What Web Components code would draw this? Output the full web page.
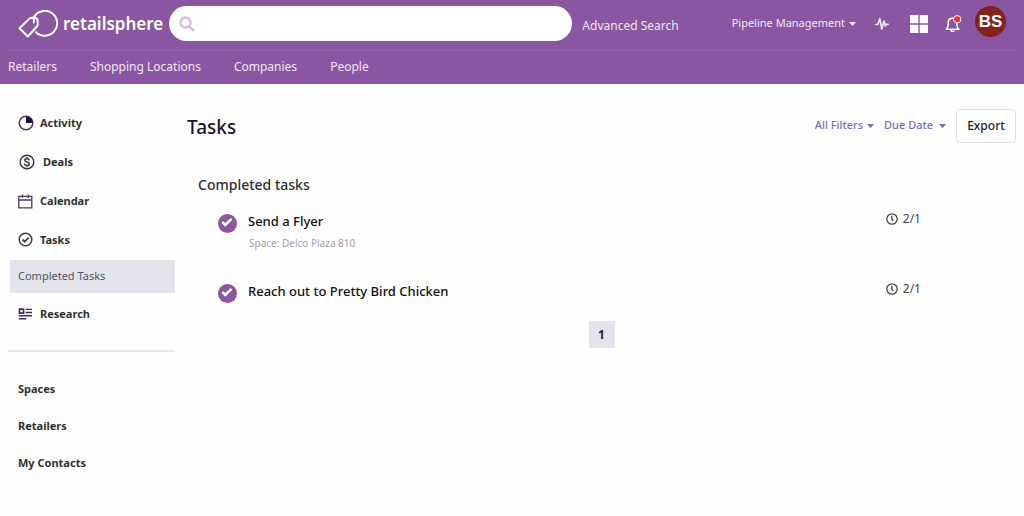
<!DOCTYPE html>
<html lang="en">
<head>
<meta charset="utf-8">
<meta name="viewport" content="width=device-width, initial-scale=1">
<title>Tasks - retailsphere</title>
<style>
  body { margin: 0; background: #fefefe; color: #303030; font: 12px/16px "Noto Sans", "Open Sans", sans-serif; }
</style>
</head>
<body>
<app-shell>
  <app-header slot="header"></app-header>
  <side-nav slot="side"></side-nav>
  <task-page></task-page>
</app-shell>

<script>
const define = (name, html) => {
  const template = document.createElement('template');
  template.innerHTML = html;
  customElements.define(name, class extends HTMLElement {
    constructor() {
      super();
      this.attachShadow({ mode: 'open' }).append(template.content.cloneNode(true));
    }
  });
};

define('app-shell', `
  <style>
    :host { display: block; }
    .body { display: grid; grid-template-columns: 167px minmax(0, 1fr); column-gap: 12px; padding: 0 8px; }
  </style>
  <slot name="header"></slot>
  <div class="body"><slot name="side"></slot><slot></slot></div>
`);

/* Drop-down whose single visible label is followed by a small caret. */
customElements.define('menu-select', class extends HTMLElement {
  connectedCallback() {
    const root = this.attachShadow({ mode: 'open' });
    root.innerHTML = `
      <style>
        :host { display: inline-flex; align-items: center; gap: var(--caret-gap, 4px); }
        select { appearance: none; field-sizing: content; border: 0; margin: 0; padding: 0; background: none; color: inherit; font: inherit; }
        svg { width: 7px; height: 4px; fill: currentColor; pointer-events: none; margin-top: 2px; }
      </style>
      <select><option></option></select>
      <svg viewBox="0 0 7 4" aria-hidden="true"><path d="M0 0h7L3.500 4z"/></svg>`;
    const select = root.querySelector('select');
    select.setAttribute('aria-label', this.getAttribute('label'));
    select.options[0].textContent = this.getAttribute('label');
  }
});

define('brand-logo', `
  <style>
    :host { display: block; }
    a { display: flex; align-items: center; gap: 4px; color: #fff; text-decoration: none; font-weight: 600; font-size: 17px; line-height: 28px; }
    svg { width: 41px; height: 28px; }
  </style>
  <a href="#"><svg viewBox="0 0 41 28" fill="none" stroke="#fff" stroke-width="2" stroke-linejoin="round" stroke-linecap="round" aria-hidden="true">
    <path d="M15.800 7.200A12.500 12.500 0 1 1 18 22.300"/>
    <path d="M15.800 12.500c-.4-2.400.1-4 1.200-5.800"/>
    <path d="M1.500 18.300 11.500 8.600q1-.9 2.400-.9l3.400.2q2 .2 2.200 2.200l.3 4q0 1.400-.9 2.400L9.800 26.500z"/>
  </svg><span>retailsphere</span></a>
`);

define('search-box', `
  <style>
    :host { display: block; }
    label { display: flex; align-items: center; gap: 8px; height: 35px; padding: 0 16px 0 10px; border-radius: 18px; background: #fff; }
    svg { flex: none; width: 16px; height: 16px; }
    input { flex: 1; min-width: 0; border: 0; padding: 0; outline: 0; background: none; font: inherit; color: #303030; }
  </style>
  <label><svg viewBox="0 0 16 16" fill="none" stroke="#d5bfe0" stroke-width="2.400" stroke-linecap="round" aria-hidden="true"><circle cx="6.500" cy="6.500" r="5"/><path d="M10.300 10.300 14.300 14.300"/></svg>
  <input type="search" aria-label="Search"></label>
`);

define('app-header', `
  <style>
    :host { display: block; background: #8b56a1; color: #f0e6f4; padding: 0 8px; }
    .top { display: flex; align-items: center; height: 49px; padding: 0 10px; border-bottom: 2px solid #935fa9; }
    .top > * { flex: none; }
    brand-logo { margin: 0 6px 2px 0; }
    .top search-box { flex: 1 1 0; margin-bottom: 2px; }
    a { color: inherit; text-decoration: none; }
    .advanced { margin: 2px 53px 0 10px; }
    menu-select { font-size: 11px; margin: 0 19px 4px 0; }
    button { display: block; border: 0; padding: 0; background: none; color: #fff; margin-bottom: 2px; }
    button svg { display: block; }
    .avatar { width: 31px; height: 31px; border-radius: 50%; background: #83231f; font: bold 17px/31px "Liberation Sans", Arial, sans-serif; margin-bottom: 6px; }
    .pulse { margin-right: 21px; }
    .grid { margin-right: 17px; }
    .bell { margin-right: 13px; }
    nav { display: flex; gap: 33px; align-items: center; padding-bottom: 2px; height: 31px; }
  </style>
  <div class="top">
    <brand-logo></brand-logo>
    <search-box></search-box>
    <a class="advanced" href="#">Advanced Search</a>
    <menu-select label="Pipeline Management"></menu-select>
    <button class="pulse" aria-label="Activity"><svg width="14" height="14" viewBox="0 0 14 14" fill="none" stroke="#f3eaf7" stroke-width="1.600" stroke-linejoin="round" stroke-linecap="round"><path d="M.8 7.500h2L4.800 1.500l2 10.500L9 4l1.400 5 1-1.800h1.800"/></svg></button>
    <button class="grid" aria-label="Apps"><svg width="18" height="18" viewBox="0 0 18 18" fill="#fff"><path d="M0 0h8.300v8.300H0zM9.700 0H18v8.300H9.700zM0 9.700h8.300V18H0zM9.700 9.700H18V18H9.700z"/></svg></button>
    <button class="bell" aria-label="Notifications"><svg width="17" height="18" viewBox="0 0 17 18" fill="none" stroke="#fff" stroke-width="1.500" stroke-linejoin="round"><path d="M1.200 14.200h12.600c-1.700-1.200-2-2.700-2-6.200 0-3-1.800-4.700-4.300-4.700S3.200 5 3.200 8c0 3.500-.3 5-2 6.200zM5.500 14.500c.3 2.600 3.700 2.600 4 0"/><circle cx="12.200" cy="4.300" r="3.700" fill="#f3302f" stroke="#fff" stroke-width="1"/></svg></button>
    <button class="avatar">BS</button>
  </div>
  <nav aria-label="Primary"><a href="#">Retailers</a><a href="#">Shopping Locations</a><a href="#">Companies</a><a href="#">People</a></nav>
`);

define('nav-item', `
  <style>
    :host { display: block; font-size: 11px; font-weight: 700; }
    a { display: flex; align-items: center; gap: var(--icon-gap, 6px); height: 37px; padding-left: 10px; color: inherit; text-decoration: none; }
    :host([current]) { font-weight: 400; color: #555560; margin-left: 2px; background: #e3e3ec; }
    :host([current]) a { height: 33px; padding: 0 8px 2px; box-sizing: border-box; }
    ::slotted(svg) { width: 16px; height: 16px; flex: none; }
  </style>
  <a href="#"><slot name="icon"></slot><slot></slot></a>
`);

define('side-nav', `
  <style>
    :host { display: block; padding-top: 20px; }
    nav { display: grid; }
    .primary { gap: 2px; }
    .deals { --icon-gap: 8px; padding-left: 1px; }
    hr { border: 0; border-top: 2px solid #eaeaee; margin: 18px 0; }
  </style>
  <nav class="primary" aria-label="Workspace">
    <nav-item><svg slot="icon" viewBox="0 0 16 16" fill="none" stroke="#4a3560" stroke-width="1.500"><circle cx="8" cy="8" r="6.800"/><path d="M8 1.200V8h6.800A6.800 6.800 0 0 0 8 1.200z" fill="#24103c" stroke="none"/></svg>Activity</nav-item>
    <nav-item class="deals"><svg slot="icon" viewBox="0 0 16 16" fill="none" stroke="#35304a" stroke-width="1.400" stroke-linecap="round"><circle cx="8" cy="8" r="6.800"/><path d="M10.200 5.900c-.4-.9-1.200-1.200-2.200-1.200-1.300 0-2.200.6-2.200 1.600 0 2.300 4.600 1.100 4.600 3.400 0 1-.9 1.700-2.400 1.700-1.200 0-2.100-.5-2.400-1.400M8 3.500v1.200m0 6.700v1.200"/></svg>Deals</nav-item>
    <nav-item><svg slot="icon" viewBox="0 0 16 16" fill="none" stroke="#4a3a5c" stroke-width="1.300"><path d="M.8 3.300h13v11.500h-13zM.8 7h13M4.500 1.400v3.500M10.300 1.400v3.500"/></svg>Calendar</nav-item>
    <nav-item><svg slot="icon" viewBox="0 0 16 16" fill="none" stroke="#3c3c3c" stroke-width="1.500"><circle cx="7.500" cy="7.500" r="6.300"/><path d="m4.600 7.500 2.100 2.100 3.900-4" stroke-width="1.800"/></svg>Tasks</nav-item>
    <nav-item current>Completed Tasks</nav-item>
    <nav-item><svg slot="icon" viewBox="0 0 16 16" fill="none" stroke="#3d2c58" stroke-width="1.400"><path d="M1.500 3.200h4v4h-4z" stroke-width="1.700"/><path d="M7.500 3.400H14M7.500 6.500H14M.8 9.700H14M.8 12.700h7.500"/></svg>Research</nav-item>
  </nav>
  <hr>
  <nav aria-label="Lists"><nav-item>Spaces</nav-item><nav-item>Retailers</nav-item><nav-item>My Contacts</nav-item></nav>
`);

define('task-row', `
  <style>
    :host { display: grid; grid-template-columns: 19px minmax(0, 1fr) auto; column-gap: 11px; align-items: start; min-height: 70px; padding: 0 95px 0 31px; box-sizing: border-box; }
    .tick { display: grid; margin-top: 3px; }
    .tick > * { grid-area: 1 / 1; }
    input { appearance: none; margin: 0; width: 19px; height: 19px; border-radius: 50%; background: #8b56a1; }
    svg { pointer-events: none; }
    label { display: block; font-size: 13px; line-height: 20px; font-weight: 500; color: #111; }
    .note { display: block; margin: 4px 1px; font-size: 10px; line-height: 16px; color: #a3a0ab; }
    .due { display: flex; align-items: center; gap: 5px; line-height: 16px; color: #444; }
  </style>
  <span class="tick"><input type="checkbox" id="done" checked><svg width="19" height="19" viewBox="0 0 19 19" fill="none" stroke="#fff" stroke-width="2.500" aria-hidden="true"><path d="m4.300 8 3 3 6.200-6.200"/></svg></span>
  <div><label for="done"><slot></slot></label><span class="note"><slot name="note"></slot></span></div>
  <span class="due"><svg width="12" height="12" viewBox="0 0 12 12" fill="none" stroke="#444" stroke-width="1.300" aria-hidden="true"><circle cx="6" cy="6" r="5.200"/><path d="M5.800 2.800v3.400l1.500 1.600"/></svg><slot name="due"></slot></span>
`);

define('task-page', `
  <style>
    :host { display: block; padding-top: 25px; }
    header { display: flex; align-items: center; height: 34px; color: #7b6bbf; font-size: 11px; font-weight: 500; }
    h1 { flex: 1; margin: 2px 0 0; font-size: 19px; line-height: 24px; font-weight: 500; color: #1f1233; }
    menu-select { margin: 0 10px 2px 0; }
    .due { --caret-gap: 6px; }
    button { font: inherit; }
    .export { box-sizing: border-box; width: 60px; height: 34px; padding: 0; border: 1px solid #e0dfe9; border-radius: 4px; background: #fff; color: #222; font-size: 12px; }
    h2 { margin: 32px 0 16px 11px; font-size: 14px; line-height: 20px; font-weight: 500; color: #303030; }
    task-row:last-of-type { min-height: 40px; }
    .pager { display: flex; justify-content: center; }
    .pager button { width: 26px; height: 27px; border: 0; padding: 0; background: #e3e3ec; color: #222; font-size: 12px; font-weight: 700; }
  </style>
  <main>
    <header>
      <h1>Tasks</h1>
      <menu-select label="All Filters"></menu-select>
      <menu-select class="due" label="Due Date"></menu-select>
      <button class="export">Export</button>
    </header>
    <h2>Completed tasks</h2>
    <task-row>Send a Flyer<span slot="note">Space: Delco Plaza 810</span><span slot="due">2/1</span></task-row>
    <task-row>Reach out to Pretty Bird Chicken<span slot="due">2/1</span></task-row>
    <nav class="pager" aria-label="Pages"><button aria-current="page">1</button></nav>
  </main>
`);
</script>
</body>
</html>
